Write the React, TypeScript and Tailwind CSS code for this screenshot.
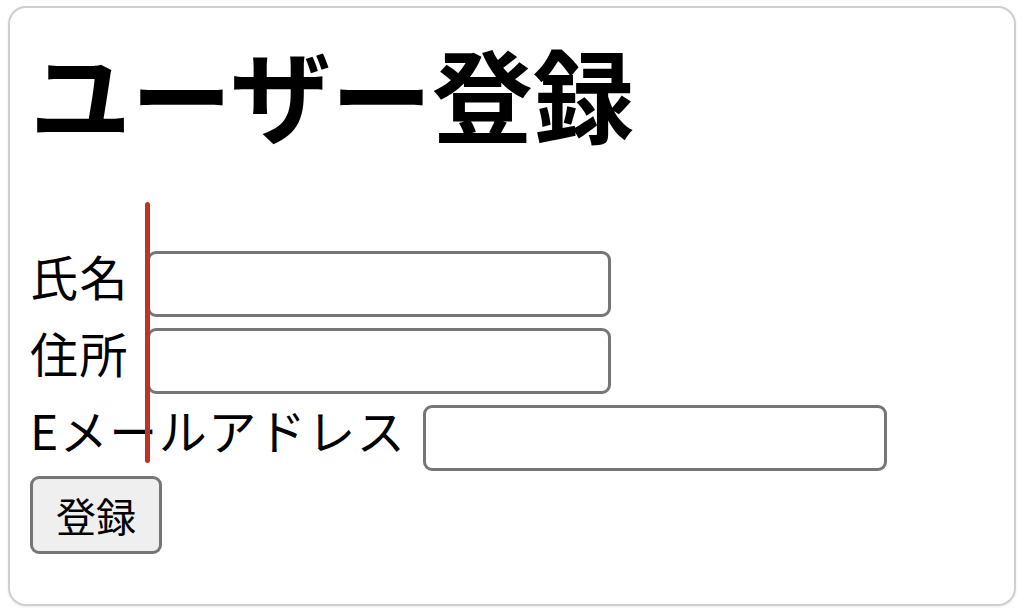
export default function App() {
  return (
    <div
      className="min-h-[616px] bg-white pt-[6px] px-[8px]"
      style={{ fontFamily: '"Noto Sans CJK JP", "Noto Sans", sans-serif' }}
    >
      <div className="relative h-[600px] rounded-[18px] border-2 border-[#cfcfcf] bg-white px-[20px] pt-[34px] shadow-[0_1px_3px_rgba(0,0,0,0.08)]">
        <h1 className="text-[101px] font-bold leading-none text-black">ユーザー登録</h1>

        <form className="mt-[102px] flex flex-col" onSubmit={(e) => e.preventDefault()}>
          <div className="flex h-[77px] items-center gap-[18px]">
            <label className="pb-[18px] text-[48px] leading-none tracking-[1.5px] text-black">氏名</label>
            <input
              type="text"
              className="h-[66px] w-[464px] shrink-0 rounded-[9px] border-[3px] border-[#767676] bg-white"
            />
          </div>
          <div className="flex h-[77px] items-center gap-[18px]">
            <label className="pb-[18px] text-[48px] leading-none tracking-[1.5px] text-black">住所</label>
            <input
              type="text"
              className="h-[66px] w-[464px] shrink-0 rounded-[9px] border-[3px] border-[#767676] bg-white"
            />
          </div>
          <div className="flex h-[77px] items-center gap-[17px]">
            <label className="pb-[18px] text-[48px] leading-none tracking-[1.5px] text-black">Eメールアドレス</label>
            <input
              type="email"
              className="h-[66px] w-[464px] shrink-0 rounded-[9px] border-[3px] border-[#767676] bg-white"
            />
          </div>
          <div>
            <button
              type="submit"
              className="h-[78px] w-[132px] rounded-[9px] border-[3px] border-[#767676] bg-[#efefef] text-[40px] leading-none text-black"
            >
              登録
            </button>
          </div>
        </form>

        {/* red marker line */}
        <div className="absolute left-[135px] top-[194px] h-[261px] w-[5px] rounded-full bg-[#c13222]" />
      </div>
    </div>
  );
}
